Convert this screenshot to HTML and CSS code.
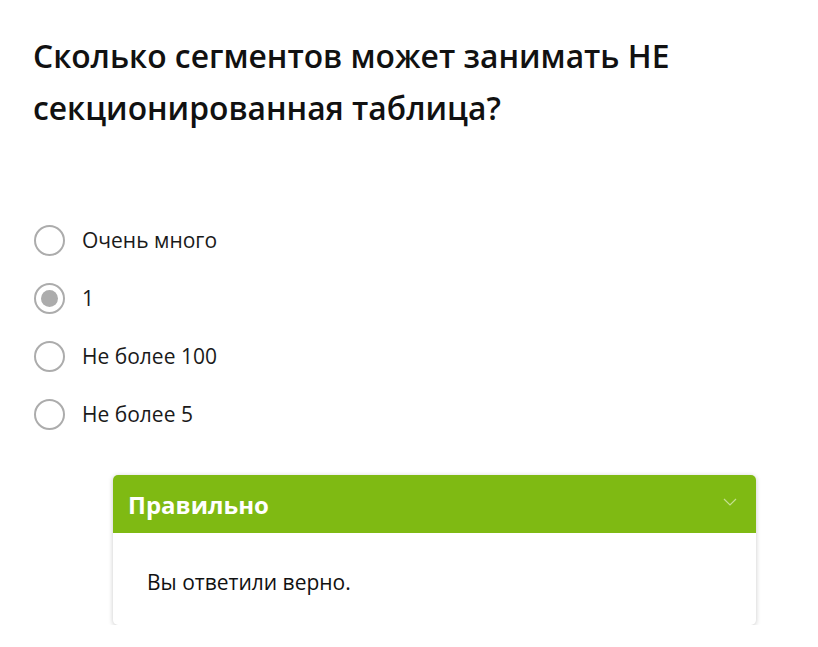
FILE: index.html
```html
<!DOCTYPE html>
<html lang="ru">
<head>
<meta charset="utf-8">
<link rel="stylesheet" href="styles.css">
</head>
<body>
<div class="page">
  <h1 class="question">Сколько сегментов может занимать НЕ секционированная таблица?</h1>
  <ul class="options">
    <li class="option"><span class="radio"></span><span class="label">Очень много</span></li>
    <li class="option"><span class="radio checked"></span><span class="label">1</span></li>
    <li class="option"><span class="radio"></span><span class="label">Не более 100</span></li>
    <li class="option"><span class="radio"></span><span class="label">Не более 5</span></li>
  </ul>
  <div class="card">
    <div class="card-head">
      <span class="card-title">Правильно</span>
      <svg class="chevron" width="14" height="8" viewBox="0 0 14 8"><path d="M1 1 L7 7 L13 1" fill="none" stroke="#c5e08f" stroke-width="1.2"/></svg>
    </div>
    <div class="card-body">Вы ответили верно.</div>
  </div>
</div>
</body>
</html>
```
FILE: styles.css
```css
html, body {
  margin: 0;
  padding: 0;
  background: #fff;
}
body {
  font-family: "Open Sans", "Noto Sans", sans-serif;
  color: #111;
}
.page {
  padding: 30px 33px 0 33px;
}
.question {
  margin: 0;
  font-size: 31.8px;
  font-weight: 600;
  line-height: 52px;
  color: #111;
  width: 720px;
}
.options {
  list-style: none;
  margin: 0;
  padding: 0;
  margin-top: 91px;
  display: flex;
  flex-direction: column;
  gap: 28px;
}
.option {
  display: flex;
  align-items: center;
  height: 30px;
  gap: 17px;
  margin-left: 1px;
}
.radio {
  box-sizing: border-box;
  width: 31px;
  height: 31px;
  border-radius: 50%;
  border: 2.5px solid #acacac;
  display: flex;
  align-items: center;
  justify-content: center;
}
.radio.checked::after {
  content: "";
  width: 17px;
  height: 17px;
  border-radius: 50%;
  background: #acacac;
}
.label {
  font-size: 21px;
  color: #1a1a1a;
}
.card {
  margin-top: 46px;
  margin-left: 80px;
  width: 643px;
  border-radius: 5px;
  background: #fff;
  box-shadow: 0 1px 5px rgba(0,0,0,0.22);
  overflow: hidden;
}
.card-head {
  background: #7fba13;
  height: 58px;
  display: flex;
  align-items: center;
  justify-content: space-between;
  padding: 0 19px 0 15px;
}
.card-title {
  color: #fff;
  font-size: 24px;
  font-weight: 700;
}
.chevron {
  margin-top: -4px;
}
.card-body {
  padding: 34px 34px 28px 34px;
  font-size: 21px;
  color: #111;
  line-height: 30px;
}
```
